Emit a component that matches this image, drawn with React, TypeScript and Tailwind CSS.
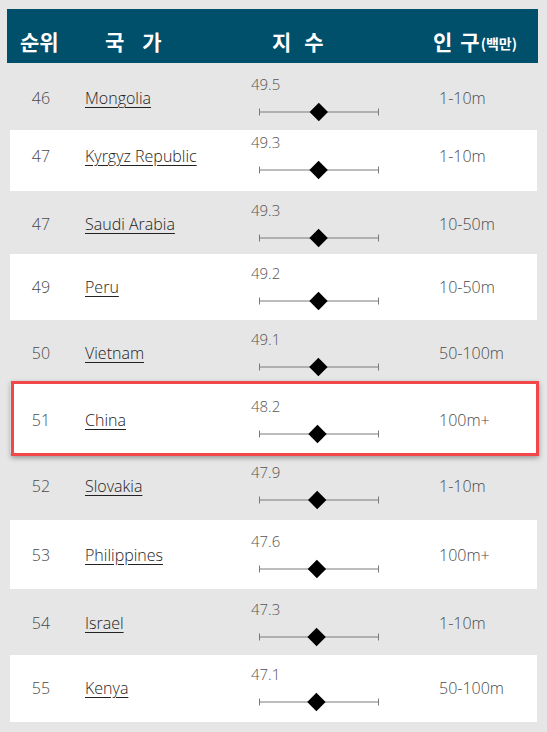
const rows = [
  { rank: 46, name: "Mongolia", score: 49.5, pop: "1-10m", h: 67, pt: 12, white: false },
  { rank: 47, name: "Kyrgyz Republic", score: 49.3, pop: "1-10m", h: 61, pt: 3, white: true },
  { rank: 47, name: "Saudi Arabia", score: 49.3, pop: "10-50m", h: 63, pt: 10, white: false },
  { rank: 49, name: "Peru", score: 49.2, pop: "10-50m", h: 66, pt: 10, white: true },
  { rank: 50, name: "Vietnam", score: 49.1, pop: "50-100m", h: 64, pt: 10, white: false },
  { rank: 51, name: "China", score: 48.2, pop: "100m+", h: 69, pt: 13, white: true, mark: true },
  { rank: 52, name: "Slovakia", score: 47.9, pop: "1-10m", h: 67, pt: 10, white: false },
  { rank: 53, name: "Philippines", score: 47.6, pop: "100m+", h: 69, pt: 12, white: true },
  { rank: 54, name: "Israel", score: 47.3, pop: "1-10m", h: 66, pt: 11, white: false },
  { rank: 55, name: "Kenya", score: 47.1, pop: "50-100m", h: 67, pt: 10, white: true },
];

const ScoreBar = ({ score }: { score: number }) => {
  // diamond centre, px from the left end of the 120px range
  const x = 59.8 - (49.5 - score) * 1.0;
  return (
    <svg width="124" height="20" viewBox="0 0 124 20" className="block">
      <line x1="0.5" y1="10" x2="119.5" y2="10" stroke="#7a7a7a" strokeWidth="1" />
      <line x1="0.5" y1="6.5" x2="0.5" y2="13.5" stroke="#7a7a7a" strokeWidth="1" />
      <line x1="119.5" y1="6.5" x2="119.5" y2="13.5" stroke="#7a7a7a" strokeWidth="1" />
      <polygon
        points={`${x},0.8 ${x + 9.2},10 ${x},19.2 ${x - 9.2},10`}
        fill="#000"
      />
    </svg>
  );
};

const App = () => {
  return (
    <div
      className="w-[547px] h-[732px] bg-[#e6e6e6] pt-[9px] overflow-hidden"
      style={{ fontFamily: "'Open Sans', 'Noto Sans', sans-serif" }}
    >
      <div className="ml-[7px] w-[531px]">
        <div
          className="h-[54px] bg-[#00506b] flex items-end pb-[10px] text-white font-bold text-[21px] leading-[24px]"
          style={{ fontFamily: "'Noto Sans CJK KR', sans-serif" }}
        >
          <div className="w-[98px] pl-[13px]">순위</div>
          <div className="w-[167px] flex gap-[18px]">
            <span>국</span>
            <span>가</span>
          </div>
          <div className="w-[161px] flex gap-[13px]">
            <span>지</span>
            <span>수</span>
          </div>
          <div className="flex items-end">
            <span>인</span>
            <span className="ml-[8px]">구</span>
            <span className="ml-[1px] text-[14px] leading-[20px]">(백만)</span>
          </div>
        </div>

        {rows.map((r, i) => (
          <div
            key={i}
            className={`relative flex items-start ml-[3px] mr-[1px] ${r.white ? "bg-white" : ""}`}
            style={{ height: r.h, paddingTop: r.pt }}
          >
            {r.mark && (
              <div className="absolute left-[1px] -right-[2px] -top-[3px] -bottom-[3px] border-[3px] border-[#f2474a] shadow-[0_2px_5px_rgba(0,0,0,0.35)]" />
            )}
            <div className="w-[62px] mt-[13px] text-center text-[16px] leading-[20px] font-light text-[#4a4a4a]">
              {r.rank}
            </div>
            <div className="w-[179px] mt-[13px] pl-[13px] text-[16px] leading-[20px] font-light text-[#222]">
              <span className="underline underline-offset-[3px]">{r.name}</span>
            </div>
            <div className="w-[188px] flex flex-col">
              <div className="text-[15px] leading-[18px] font-light text-[#555]">{r.score.toFixed(1)}</div>
              <div className="mt-[9px] ml-[8px]">
                <ScoreBar score={r.score} />
              </div>
            </div>
            <div className="mt-[13px] text-[16px] leading-[20px] font-light text-[#4a4a4a]">{r.pop}</div>
          </div>
        ))}
      </div>
    </div>
  );
};

export default App;
